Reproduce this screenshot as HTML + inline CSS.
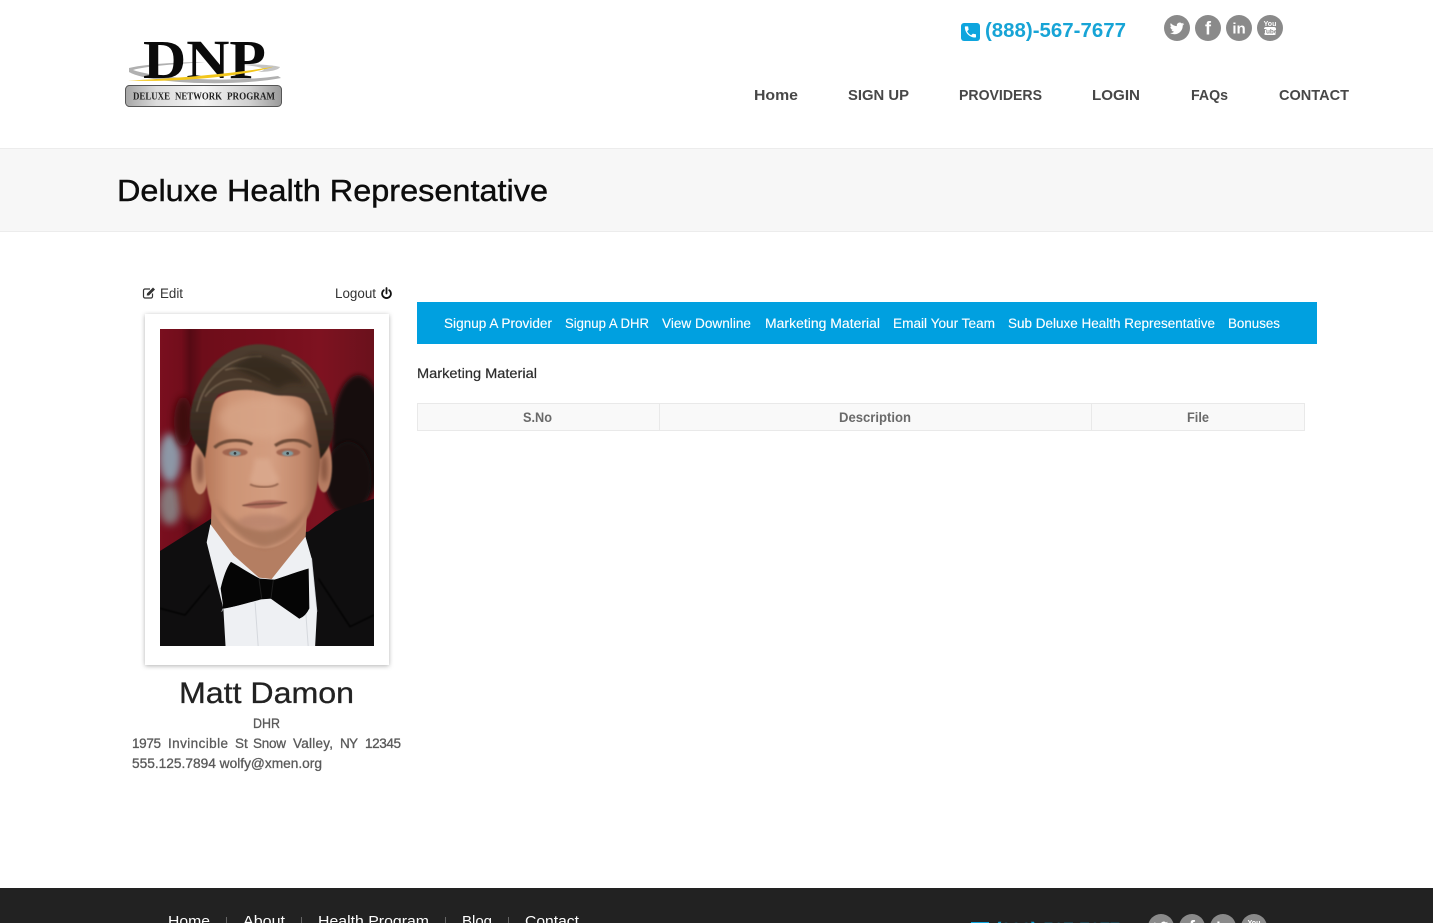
<!DOCTYPE html>
<html lang="en"><head><meta charset="utf-8"><title>Deluxe Health Representative</title>
<style>
html,body{margin:0;padding:0;background:#fff;width:1433px;height:923px;overflow:hidden}
svg{display:block}
text{font-family:"Liberation Sans",sans-serif}
.nav{font-size:15px;font-weight:700;fill:#474747}
.bar{font-size:13.5px;fill:#fff;stroke:#fff;stroke-width:.12}
.th{font-size:13.5px;font-weight:700;fill:#6a6a6a}
.adr{font-size:13.5px;fill:#5a5a5a;stroke:#5a5a5a;stroke-width:.3}
.ft{font-size:15px;fill:#fff}
.lnk{font-size:13.5px;fill:#333}
.pl{font-size:11px;font-weight:700;fill:#222;font-family:"Liberation Serif",serif}
</style></head><body>
<svg width="1433" height="923" viewBox="0 0 1433 923" xmlns="http://www.w3.org/2000/svg">
<defs>
<linearGradient id="plate" x1="0" x2="1" y1="0" y2="0"><stop offset="0" stop-color="#a6a6a6"/><stop offset=".2" stop-color="#dcdcdc"/><stop offset=".5" stop-color="#f4f4f4"/><stop offset=".8" stop-color="#d0d0d0"/><stop offset="1" stop-color="#9a9a9a"/></linearGradient>
<linearGradient id="skin" x1="0" x2="1" y1="0" y2="0"><stop offset="0" stop-color="#b57759"/><stop offset=".22" stop-color="#cd9475"/><stop offset=".6" stop-color="#d39d80"/><stop offset=".85" stop-color="#c08669"/><stop offset="1" stop-color="#8f5c44"/></linearGradient>
<linearGradient id="curtain" x1="0" x2="1" y1="0" y2="0"><stop offset="0" stop-color="#7a0f1f"/><stop offset=".1" stop-color="#720d1b"/><stop offset=".14" stop-color="#560a14"/><stop offset=".2" stop-color="#6e0d1a"/><stop offset=".5" stop-color="#760e1c"/><stop offset=".75" stop-color="#7e1220"/><stop offset="1" stop-color="#6a111c"/></linearGradient>
<linearGradient id="hairg" x1="0" x2="0" y1="0" y2="1"><stop offset="0" stop-color="#4d3c2e"/><stop offset=".45" stop-color="#46362a"/><stop offset="1" stop-color="#281d16"/></linearGradient>
<filter id="b1" x="-20%" y="-20%" width="140%" height="140%"><feGaussianBlur stdDeviation="2.500"/></filter>
<filter id="b2" x="-60%" y="-60%" width="220%" height="220%"><feGaussianBlur stdDeviation="12"/></filter>
<filter id="b3" x="-50%" y="-50%" width="200%" height="200%"><feGaussianBlur stdDeviation="7"/></filter>
<filter id="sh" x="-10%" y="-10%" width="120%" height="120%"><feDropShadow dx="0" dy="1" stdDeviation="2.500" flood-color="#000" flood-opacity=".3"/></filter>
<clipPath id="ph"><rect x="15" y="12" width="642" height="951"/></clipPath>
<path id="tw" d="M23.95 4.57a10 10 0 0 1-2.82.77 4.96 4.96 0 0 0 2.16-2.72c-.95.55-2 .96-3.12 1.19a4.92 4.92 0 0 0-8.38 4.48C7.69 8.1 4.07 6.13 1.64 3.16a4.82 4.82 0 0 0-.66 2.48c0 1.71.87 3.21 2.19 4.1a4.9 4.9 0 0 1-2.23-.62v.06a4.92 4.92 0 0 0 3.95 4.83 5 5 0 0 1-2.21.08 4.94 4.94 0 0 0 4.6 3.42A9.87 9.87 0 0 1 0 19.54a14 14 0 0 0 7.56 2.21c9.05 0 14-7.5 14-13.98 0-.21 0-.42-.02-.63a9.94 9.94 0 0 0 2.46-2.55z"/>
<g id="social">
<circle cx="0" cy="0" r="13" fill="#8a8a8a"/><use href="#tw" transform="translate(-7.2,-6.8) scale(.6)" fill="#fff"/>
<circle cx="31" cy="0" r="13" fill="#8a8a8a"/><text x="31" y="6.500" text-anchor="middle" font-size="18" font-weight="700" fill="#fff">f</text>
<circle cx="62" cy="0" r="13" fill="#8a8a8a"/><text x="62" y="5.500" text-anchor="middle" font-size="15" font-weight="700" fill="#fff">in</text>
<circle cx="93" cy="0" r="13" fill="#8a8a8a"/><text x="93" y="-2" text-anchor="middle" font-size="7" font-weight="700" fill="#fff">You</text><rect x="87" y="-1" width="12" height="8" rx="2" fill="#fff"/><text x="93" y="5.500" text-anchor="middle" font-size="6.500" font-weight="700" fill="#8a8a8a">Tube</text>
</g>
</defs>

<rect width="1433" height="923" fill="#fff"/>

<!-- logo -->
<g>
<path d="M129 68C150 63 190 62 205 62C180 64 145 66 133 70C160 79 230 83 278 76L281 78C235 87 150 84 129 72Z" fill="#b0b0b0"/>
<path d="M235 64C255 64 275 65 280 67C278 71 265 72 258 72C268 70 268 67 235 64Z" fill="#c4c4c4"/>
<text x="143" y="78" font-size="55" font-weight="700" textLength="123" lengthAdjust="spacingAndGlyphs" fill="#0a0a0a" style="font-family:'Liberation Serif',serif">DNP</text>
<path d="M128 80.500C170 79 240 73 274 66.500C245 76 180 82.500 128 80.500Z" fill="#f2c61c"/>
<rect x="125.500" y="85.500" width="156" height="21" rx="4" fill="url(#plate)" stroke="#555"/>
<text class="pl" x="133" y="99.500" textLength="37" lengthAdjust="spacingAndGlyphs">DELUXE</text>
<text class="pl" x="175" y="99.500" textLength="47" lengthAdjust="spacingAndGlyphs">NETWORK</text>
<text class="pl" x="227" y="99.500" textLength="48" lengthAdjust="spacingAndGlyphs">PROGRAM</text>
</g>

<!-- phone -->
<rect x="961" y="23" width="19" height="18" rx="3" fill="#0ea5de"/>
<path transform="translate(963,24.500) scale(.62)" fill="#fff" d="M6.62 10.79a15.05 15.05 0 0 0 6.59 6.59l2.2-2.2a1 1 0 0 1 1.02-.24c1.12.37 2.33.57 3.57.57a1 1 0 0 1 1 1V20a1 1 0 0 1-1 1C10.61 21 3 13.39 3 4a1 1 0 0 1 1-1h3.5a1 1 0 0 1 1 1c0 1.25.2 2.45.57 3.57a1 1 0 0 1-.25 1.02z"/>
<text x="985" y="37" font-size="20" font-weight="700" textLength="141" lengthAdjust="spacingAndGlyphs" fill="#17a4d6">(888)-567-7677</text>
<use href="#social" transform="translate(1177,28)"/>

<!-- nav -->
<text class="nav" x="754" y="100" textLength="44" lengthAdjust="spacingAndGlyphs">Home</text>
<text class="nav" x="848" y="100" textLength="61" lengthAdjust="spacingAndGlyphs">SIGN UP</text>
<text class="nav" x="959" y="100" textLength="83" lengthAdjust="spacingAndGlyphs">PROVIDERS</text>
<text class="nav" x="1092" y="100" textLength="48" lengthAdjust="spacingAndGlyphs">LOGIN</text>
<text class="nav" x="1191" y="100" textLength="37" lengthAdjust="spacingAndGlyphs">FAQs</text>
<text class="nav" x="1279" y="100" textLength="70" lengthAdjust="spacingAndGlyphs">CONTACT</text>

<!-- title band -->
<rect x="0" y="148" width="1433" height="84" fill="#f7f7f7"/>
<rect x="0" y="148" width="1433" height="1" fill="#ececec"/>
<rect x="0" y="231" width="1433" height="1" fill="#ececec"/>
<text x="117" y="201" font-size="31" textLength="431" lengthAdjust="spacingAndGlyphs" fill="#0c0c0c" stroke="#0c0c0c" stroke-width=".4">Deluxe Health Representative</text>

<!-- edit / logout -->
<g fill="none" stroke="#333" stroke-width="1.200">
<path d="M152.500 293.500v3a1.500 1.500 0 0 1-1.500 1.500h-6a1.500 1.500 0 0 1-1.500-1.500v-6a1.500 1.500 0 0 1 1.500-1.500h5"/>
</g>
<path d="M147 293.500l6-6 2 2-6 6h-2.300z" fill="#333"/>
<text class="lnk" x="160" y="298" textLength="23" lengthAdjust="spacingAndGlyphs">Edit</text>
<text class="lnk" x="335" y="298" textLength="41" lengthAdjust="spacingAndGlyphs">Logout</text>
<path d="M383.800 290.200a4.400 4.400 0 1 0 5.400 0M386.500 288v5.500" fill="none" stroke="#111" stroke-width="1.800" stroke-linecap="round"/>

<!-- photo card -->
<rect x="145" y="314" width="244" height="351" fill="#fff" filter="url(#sh)"/>
<g transform="translate(155,325) scale(.33333)" clip-path="url(#ph)">
<rect x="15" y="12" width="642" height="951" fill="url(#curtain)"/>
<ellipse cx="45" cy="400" rx="34" ry="75" fill="#8d97a6" filter="url(#b2)"/>
<ellipse cx="45" cy="540" rx="34" ry="60" fill="#86787a" filter="url(#b2)"/>
<ellipse cx="115" cy="510" rx="40" ry="75" fill="#84372b" filter="url(#b2)"/>
<ellipse cx="85" cy="290" rx="28" ry="75" fill="#3d0a10" filter="url(#b2)"/>
<ellipse cx="610" cy="340" rx="80" ry="190" fill="#14100e" filter="url(#b3)"/>
<ellipse cx="580" cy="460" rx="70" ry="110" fill="#14100e" filter="url(#b3)"/>
<!-- suit -->
<path d="M-20 700L170 580L300 640L460 620L540 560L690 510V1000H-20Z" fill="#0f0e0f"/>
<path d="M15 850L90 870L165 780" fill="none" stroke="#060606" stroke-width="4" filter="url(#b1)"/>
<path d="M657 870L585 905L490 760" fill="none" stroke="#060606" stroke-width="4" filter="url(#b1)"/>
<!-- shirt -->
<path d="M166 598L155 652L205 850L212 970H480L486 860L470 700L450 630L310 700Z" fill="#eef0f3"/>
<path d="M300 830L310 970M448 800L460 970" stroke="#d5d8dd" stroke-width="3" fill="none"/>
<path d="M205 850L200 860M470 700L486 860" stroke="#c9ccd2" stroke-width="2" fill="none"/>
<!-- neck -->
<path d="M170 530L168 600L235 690L312 758L350 762L452 634L458 530Z" fill="#b47e62"/>
<!-- ears -->
<ellipse cx="135" cy="428" rx="27" ry="80" fill="#c48b6e" filter="url(#b1)"/>
<ellipse cx="507" cy="425" rx="24" ry="77" fill="#b67d62" filter="url(#b1)"/>
<ellipse cx="135" cy="430" rx="10" ry="45" fill="#8e5844" filter="url(#b3)"/>
<ellipse cx="508" cy="430" rx="9" ry="42" fill="#85523d" filter="url(#b3)"/>
<!-- face -->
<path d="M148 300C155 230 190 195 300 185C400 185 482 210 494 300C502 400 492 480 470 550C450 600 400 668 328 670C260 667 200 612 170 550C148 480 143 390 148 300Z" fill="url(#skin)" filter="url(#b1)"/>
<ellipse cx="320" cy="280" rx="130" ry="60" fill="#dcab8e" opacity=".55" filter="url(#b2)"/>
<path d="M180 530C210 600 270 660 328 668C395 660 440 600 465 530C430 590 390 610 330 615C270 612 215 580 180 530Z" fill="#9a6950" opacity=".7" filter="url(#b3)"/>
<ellipse cx="325" cy="590" rx="75" ry="22" fill="#b5806a" opacity=".7" filter="url(#b3)"/>
<!-- hair -->
<path d="M105 310C98 200 170 68 300 58C420 52 530 155 536 290C538 340 522 370 496 402C490 340 482 300 465 245C445 200 385 218 350 208C300 190 230 190 190 210C160 245 165 320 150 400C130 355 110 355 105 310Z" fill="url(#hairg)" filter="url(#b1)"/>
<g fill="none" stroke="#8a7761" stroke-width="5" opacity=".6" filter="url(#b1)">
<path d="M125 260C150 150 230 90 320 95M210 135C260 120 300 135 345 165M410 110C460 150 495 200 515 270M150 215C190 160 250 155 290 170M380 90C430 105 470 140 490 190"/>
</g>
<path d="M230 125C280 150 330 170 370 190C400 170 430 170 450 180C420 130 350 90 290 90Z" fill="#2b2018" opacity=".6" filter="url(#b3)"/>
<!-- brows -->
<path d="M178 368C205 342 260 340 292 358" fill="none" stroke="#6e4c38" stroke-width="10" filter="url(#b1)"/>
<path d="M360 362C395 338 440 340 468 366" fill="none" stroke="#6e4c38" stroke-width="10" filter="url(#b1)"/>
<!-- eyes -->
<ellipse cx="240" cy="382" rx="38" ry="12" fill="#a06550" filter="url(#b1)"/>
<ellipse cx="400" cy="382" rx="36" ry="12" fill="#a06550" filter="url(#b1)"/>
<ellipse cx="240" cy="385" rx="17" ry="8" fill="#7f9ba0" filter="url(#b1)"/>
<ellipse cx="398" cy="385" rx="17" ry="8" fill="#7f9ba0" filter="url(#b1)"/>
<circle cx="240" cy="385" r="4" fill="#33383a"/><circle cx="398" cy="385" r="4" fill="#33383a"/>
<!-- nose -->
<path d="M300 400C295 440 285 455 285 470C290 485 360 490 372 468C372 455 350 440 345 400Z" fill="#dcab90" opacity=".75" filter="url(#b3)"/>
<path d="M285 478C305 488 350 490 370 476" fill="none" stroke="#8d5d47" stroke-width="5" filter="url(#b1)"/>
<!-- mouth -->
<path d="M262 542C300 522 360 522 396 532C370 552 300 556 262 542Z" fill="#ad6c5c" filter="url(#b1)"/>
<path d="M262 542C310 535 360 537 396 532" fill="none" stroke="#5f3a2c" stroke-width="3" filter="url(#b1)"/>
<!-- bow tie -->
<path d="M198 790C205 760 215 730 228 712C260 730 290 750 315 762L358 765C390 755 425 742 460 732L462 850C455 865 445 875 433 880C405 860 375 840 348 820L318 822C280 832 240 845 205 850C205 830 200 810 198 790Z" fill="#050505" stroke="#050505" stroke-width="2"/>
<path d="M312 762L320 820M355 765L348 820" stroke="#1e1e1e" stroke-width="3"/>
</g>

<!-- profile text -->
<text x="179" y="703" font-size="30" textLength="175" lengthAdjust="spacingAndGlyphs" fill="#222" stroke="#222" stroke-width=".3">Matt Damon</text>
<text class="adr" x="253" y="728" textLength="27" lengthAdjust="spacingAndGlyphs">DHR</text>
<text class="adr" x="132" y="748" textLength="29" lengthAdjust="spacing">1975</text>
<text class="adr" x="168" y="748" textLength="60" lengthAdjust="spacing">Invincible</text>
<text class="adr" x="235" y="748">St</text>
<text class="adr" x="253" y="748" textLength="33" lengthAdjust="spacing">Snow</text>
<text class="adr" x="293" y="748" textLength="40" lengthAdjust="spacing">Valley,</text>
<text class="adr" x="340" y="748" textLength="18" lengthAdjust="spacing">NY</text>
<text class="adr" x="365" y="748" textLength="36" lengthAdjust="spacing">12345</text>
<text class="adr" x="132" y="768" textLength="190" lengthAdjust="spacingAndGlyphs">555.125.7894 wolfy@xmen.org</text>

<!-- blue bar -->
<rect x="417" y="302" width="900" height="42" fill="#00a0e0"/>
<text class="bar" x="444" y="328" textLength="108" lengthAdjust="spacingAndGlyphs">Signup A Provider</text>
<text class="bar" x="565" y="328" textLength="84" lengthAdjust="spacingAndGlyphs">Signup A DHR</text>
<text class="bar" x="662" y="328" textLength="89" lengthAdjust="spacingAndGlyphs">View Downline</text>
<text class="bar" x="765" y="328" textLength="115" lengthAdjust="spacingAndGlyphs">Marketing Material</text>
<text class="bar" x="893" y="328" textLength="102" lengthAdjust="spacingAndGlyphs">Email Your Team</text>
<text class="bar" x="1008" y="328" textLength="207" lengthAdjust="spacingAndGlyphs">Sub Deluxe Health Representative</text>
<text class="bar" x="1228" y="328" textLength="52" lengthAdjust="spacingAndGlyphs">Bonuses</text>

<text x="417" y="378" font-size="13.500" textLength="120" lengthAdjust="spacingAndGlyphs" fill="#2c2c2c" stroke="#2c2c2c" stroke-width=".2">Marketing Material</text>

<!-- table -->
<rect x="417.500" y="403.500" width="887" height="27" fill="#f9f9f9" stroke="#e9e9e9"/>
<path d="M659.500 403v28M1091.500 403v28" stroke="#e9e9e9"/>
<text class="th" x="523" y="422" textLength="29" lengthAdjust="spacingAndGlyphs">S.No</text>
<text class="th" x="839" y="422" textLength="72" lengthAdjust="spacingAndGlyphs">Description</text>
<text class="th" x="1187" y="422" textLength="22" lengthAdjust="spacingAndGlyphs">File</text>

<!-- footer -->
<rect x="0" y="888" width="1433" height="35" fill="#222"/>
<text class="ft" x="168" y="926" textLength="42" lengthAdjust="spacingAndGlyphs">Home</text>
<text class="ft" x="243" y="926" textLength="42" lengthAdjust="spacingAndGlyphs">About</text>
<text class="ft" x="318" y="926" textLength="111" lengthAdjust="spacingAndGlyphs">Health Program</text>
<text class="ft" x="462" y="926" textLength="30" lengthAdjust="spacingAndGlyphs">Blog</text>
<text class="ft" x="525" y="926" textLength="54" lengthAdjust="spacingAndGlyphs">Contact</text>
<path d="M226.500 917v6M301.500 917v6M445.500 917v6M508.500 917v6" stroke="#666"/>
<rect x="971" y="922" width="18" height="1" fill="#0ea5de"/>
<text x="995" y="937" font-size="20" font-weight="700" textLength="125" lengthAdjust="spacingAndGlyphs" fill="#17a4d6" stroke="#17a4d6" stroke-width=".4">(888)-567-7677</text>
<use href="#social" transform="translate(1161,927)"/>
</svg>
</body></html>
